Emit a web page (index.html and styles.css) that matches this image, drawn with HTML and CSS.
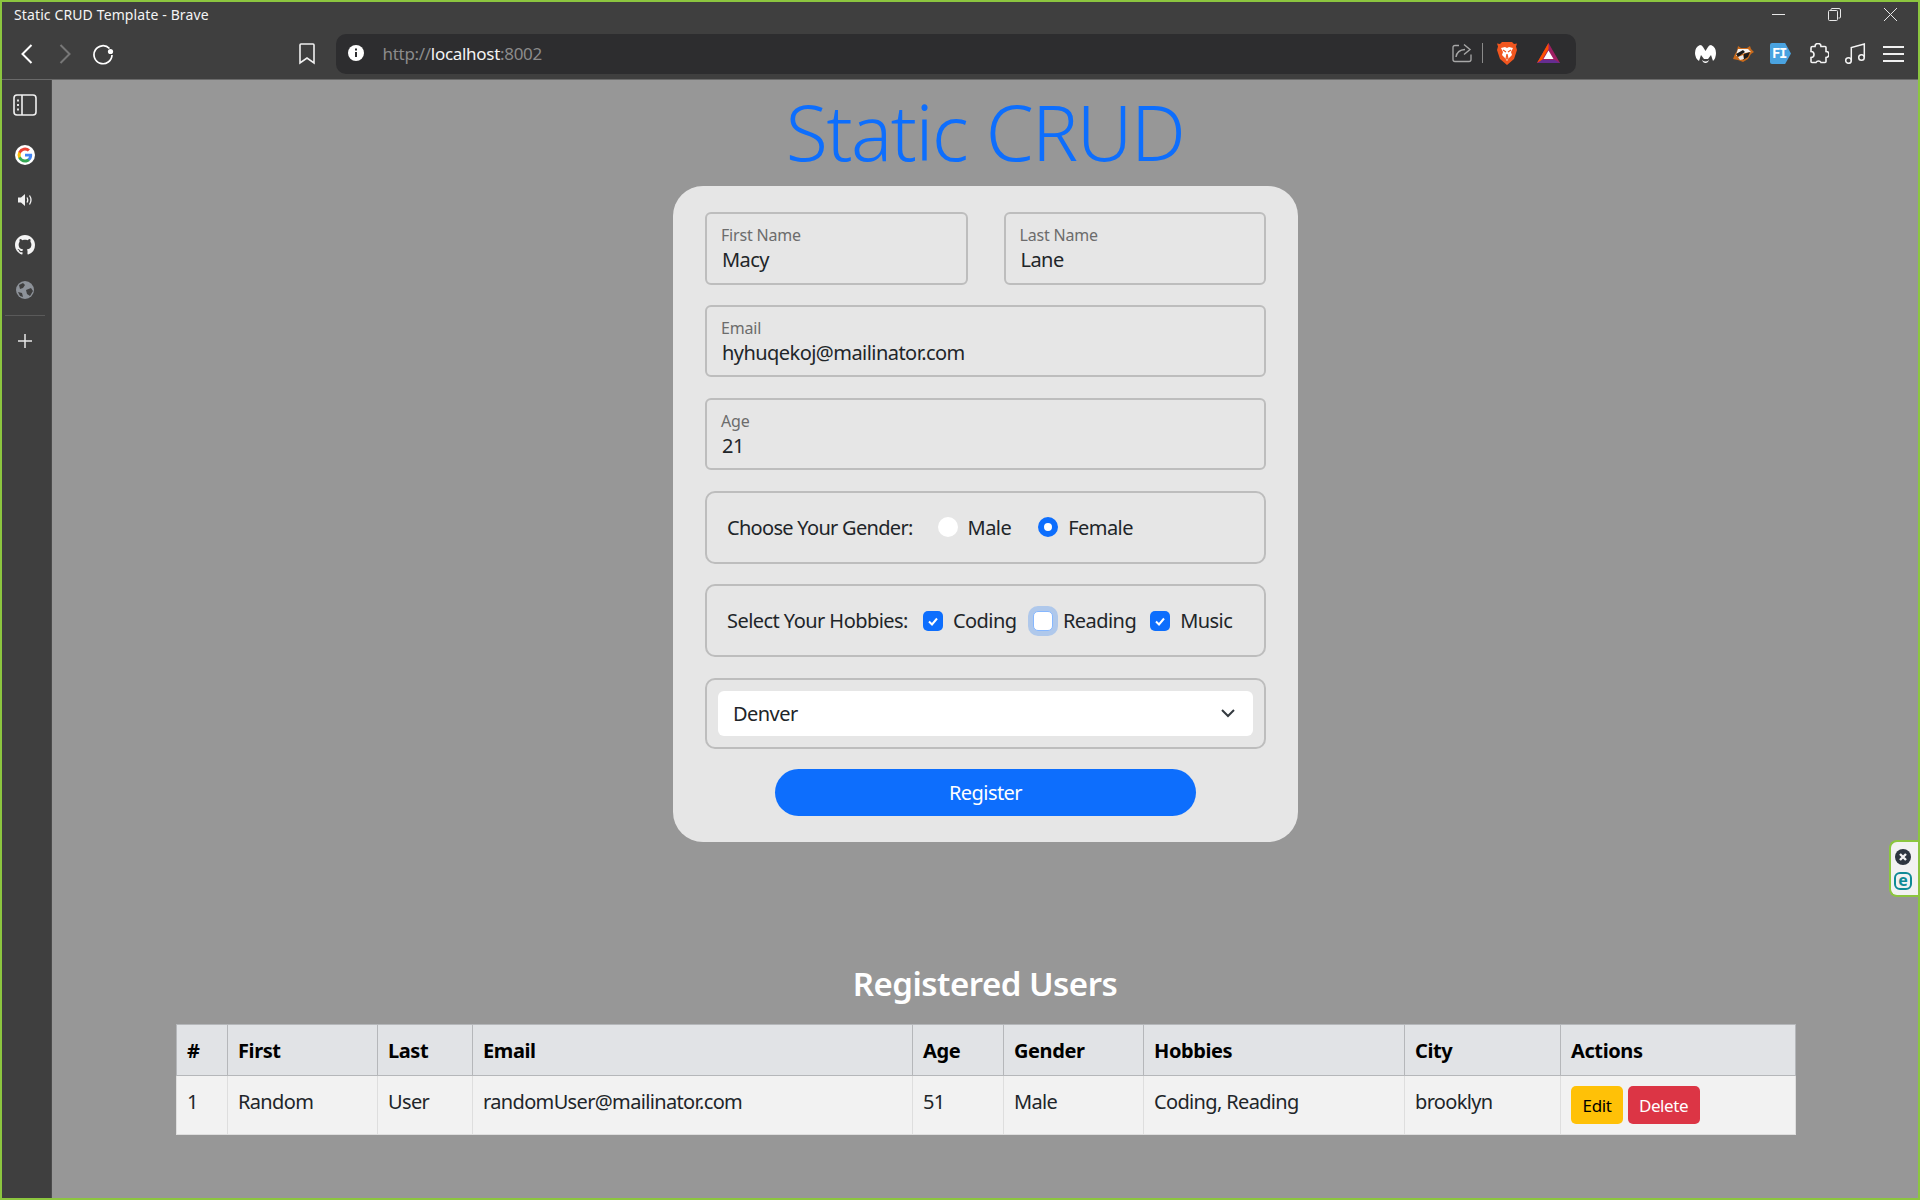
FILE: index.html
```html
<!DOCTYPE html>
<html lang="en">
<head>
    <meta charset="UTF-8">
    <title>Static CRUD Template - Brave</title>
    <link rel="stylesheet" href="styles.css">
</head>
<body>
    <div class="window">
        <div class="titlebar">
            <span class="window-title">Static CRUD Template - Brave</span>
            <div class="window-controls">
                <svg width="13" height="13" viewBox="0 0 13 13"><path d="M0 6.500h13" stroke="#e8e8e8" fill="none"/></svg>
                <svg width="13" height="13" viewBox="0 0 13 13"><path d="M3 2.500V1.500q0-1 1-1h7q1.500 0 1.500 1.500v7q0 1-1 1h-1M1.500 2.500h7q1 0 1 1v8q0 1-1 1h-7q-1 0-1-1v-8q0-1 1-1z" stroke="#e8e8e8" fill="none"/></svg>
                <svg width="13" height="13" viewBox="0 0 13 13"><path d="M0 0l13 13M13 0L0 13" stroke="#e8e8e8" fill="none"/></svg>
            </div>
        </div>

        <div class="toolbar">
            <div class="nav-buttons">
                <svg width="12" height="20" viewBox="0 0 12 20"><path d="M10.500 1L1.500 10l9 9" stroke="#fff" stroke-width="2" fill="none"/></svg>
                <svg width="12" height="20" viewBox="0 0 12 20"><path d="M1.500 1l9 9-9 9" stroke="#777" stroke-width="2" fill="none"/></svg>
                <svg class="reload" width="22" height="22" viewBox="0 0 22 22"><path d="M17.500 5.500A9 9 0 1 0 20 12" stroke="#fff" stroke-width="1.700" fill="none"/><circle cx="18.500" cy="8.500" r="2.600" fill="#fff"/></svg>
            </div>
            <svg class="bookmark" width="16" height="22" viewBox="0 0 16 22"><path d="M2 1h12q1 0 1 1v18l-7-5-7 5V2q0-1 1-1z" stroke="#f0f0f0" stroke-width="1.600" fill="none"/></svg>
            <div class="urlbar">
                <svg width="16" height="16" viewBox="0 0 16 16"><circle cx="8" cy="8" r="8" fill="#fff"/><path d="M8 7v5M8 3.500v2" stroke="#2d2d2f" stroke-width="2"/></svg>
                <span class="url"><span class="url-dim">http://</span>localhost<span class="url-dim">:8002</span></span>
                <svg width="20" height="20" viewBox="0 0 20 20"><path d="M7 3H3Q1 3 1 5v12q0 2 2 2h14q2 0 2-2v-5" stroke="#a8a8a8" stroke-width="1.300" fill="none" transform="translate(0 -.5)"/><path d="M4 14Q5 7 13 6.500M12 1.500l6 5-6 5" stroke="#a8a8a8" stroke-width="1.400" fill="none"/></svg>
                <span class="url-divider"></span>
                <svg class="brave" width="20" height="23" viewBox="0 0 20 23"><path d="M5 0h10l2 2 3-.5-1 3 1 3.500-3 9-7 6-7-6-3-9 1-3.500-1-3 3 .5z" fill="#f1561f"/><path d="M4 6l4-1 2 1 2-1 4 1-2 4 1 3-3 3-2 3-2-3-3-3 1-3z" fill="#fff"/><path d="M6 8l3 2M14 8l-3 2M9 17h2l-1-5z" stroke="#f1561f" stroke-width="1.200" fill="none"/></svg>
                <svg class="bat" width="23" height="20" viewBox="0 0 23 20"><path d="M11.500 0L0 20h23z" fill="#9e1f63"/><path d="M11.500 0L0 20l5-3 6.500-11z" fill="#ff5000"/><path d="M0 20h23l-5-3H5z" fill="#662d91"/><path d="M11.500 7.500L6.500 16h10z" fill="#fff"/></svg>
            </div>
            <div class="extensions">
                <svg width="21" height="18" viewBox="0 0 21 18"><path d="M5 0q2 0 3 2l2.500 4L13 2q1-2 3-2 5 2 5 8 0 5-3 8l-2-6-3 4h-4L6 10l-2 6Q0 13 0 8q0-6 5-8z" fill="#fff"/><path d="M7 15q3.500 3 7 0-1 3-3.500 3T7 15z" fill="#fff"/></svg>
                <svg width="21" height="17" viewBox="0 0 21 17"><path d="M5 1l3 2h6l3-2 1 3 3 3-3 2-3 5-5 3-5-2-5-1 2-5 2-3z" fill="#c96a1b"/><path d="M5 4h10l3 3-6 1-9 3 1-4z" fill="#f4f4f4"/><path d="M3 9l7-4 2 2-7 5zM11 9l6-2-2 5-5 3z" fill="#1b1b1b"/><path d="M5 12l5-2 1 4-4 1z" fill="#e8e8e8"/></svg>
                <span class="fi-logo">FI</span>
                <svg width="21" height="21" viewBox="0 0 21 21"><path d="M7 3.500a3 3 0 0 1 6 0h4q1 0 1 1v4a2.800 2.800 0 0 1 0 6v4q0 1-1 1h-4a2.800 2.800 0 0 0-5 0H4q-1 0-1-1v-4a3 3 0 0 0 0-6V5q0-1.500 1.500-1.500z" stroke="#f4f4f4" stroke-width="1.600" fill="none"/></svg>
                <svg width="21" height="21" viewBox="0 0 21 21"><circle cx="3.500" cy="17.500" r="2.800" stroke="#f4f4f4" stroke-width="1.500" fill="none"/><circle cx="16.500" cy="14.500" r="2.800" stroke="#f4f4f4" stroke-width="1.500" fill="none"/><path d="M6.300 17.500V4.500L19.300 1v13.500" stroke="#f4f4f4" stroke-width="1.500" fill="none"/></svg>
                <svg width="21" height="16" viewBox="0 0 21 16"><path d="M0 1h21M0 8h21M0 15h21" stroke="#f0f0f0" stroke-width="2"/></svg>
            </div>
        </div>

        <div class="main">
            <div class="sidebar">
                <svg width="24" height="24" viewBox="0 0 24 24"><rect x="1" y="2" width="22" height="20" rx="3" stroke="#f0f0f0" stroke-width="1.600" fill="none"/><path d="M9 2v20" stroke="#f0f0f0" stroke-width="1.600"/><path d="M5 6.500v2M5 11v2M5 15.500v2" stroke="#f0f0f0" stroke-width="1.800"/></svg>
                <svg class="side-google" width="20" height="20" viewBox="0 0 24 24"><circle cx="12" cy="12" r="12" fill="#fff"/><path d="M20.600 12.200c0-.6-.1-1.200-.2-1.800H12v3.400h4.800a4.100 4.100 0 0 1-1.800 2.700v2.200h2.900c1.700-1.600 2.700-3.900 2.700-6.500z" fill="#4285f4"/><path d="M12 21c2.400 0 4.500-.8 5.900-2.200L15 16.500c-.8.500-1.800.9-3 .9-2.300 0-4.300-1.600-5-3.700H4v2.300A9 9 0 0 0 12 21z" fill="#34a853"/><path d="M7 13.700a5.400 5.400 0 0 1 0-3.400V8H4a9 9 0 0 0 0 8z" fill="#fbbc05"/><path d="M12 6.600c1.300 0 2.500.5 3.400 1.300l2.600-2.600A9 9 0 0 0 4 8l3 2.300c.7-2.100 2.700-3.700 5-3.700z" fill="#ea4335"/></svg>
                <svg class="side-speaker" width="15" height="14" viewBox="0 0 15 14"><path d="M0 4.500h3L7 1v12L3 9.500H0z" fill="#f0f0f0"/><path d="M9 4.500q1.500 2.500 0 5M11.500 2.500q3 4.500 0 9" stroke="#f0f0f0" stroke-width="1.300" fill="none"/></svg>
                <svg class="side-github" width="20" height="20" viewBox="0 0 16 16"><path d="M8 0C3.580 0 0 3.580 0 8c0 3.540 2.290 6.530 5.470 7.590.4.070.55-.17.550-.38 0-.19-.01-.82-.01-1.490-2.010.37-2.530-.49-2.690-.94-.09-.23-.48-.94-.82-1.130-.28-.15-.68-.52-.01-.53.63-.01 1.080.58 1.230.82.720 1.210 1.870.87 2.330.66.070-.52.280-.87.510-1.070-1.780-.2-3.640-.89-3.640-3.950 0-.87.310-1.590.820-2.150-.08-.2-.36-1.020.08-2.120 0 0 .67-.21 2.200.82.640-.18 1.320-.27 2-.27.680 0 1.360.09 2 .27 1.530-1.040 2.200-.82 2.200-.82.440 1.100.160 1.920.080 2.120.510.560.820 1.270.820 2.150 0 3.070-1.870 3.750-3.650 3.950.290.250.540.730.540 1.480 0 1.070-.01 1.930-.01 2.200 0 .21.150.46.550.38A8.010 8.010 0 0 0 16 8c0-4.420-3.580-8-8-8z" fill="#f4f4f4"/></svg>
                <svg class="side-globe" width="18" height="18" viewBox="0 0 18 18"><circle cx="9" cy="9" r="9" fill="#8d9299"/><path d="M3 4l4-2 2 2-2 3-3 1zM10 9l5-2 2 3-3 5-3-2zM2 11l4 1 1 4-3-1z" fill="#3f3f3f"/></svg>
                <span class="side-divider"></span>
                <svg class="side-plus" width="14" height="14" viewBox="0 0 14 14"><path d="M7 0v14M0 7h14" stroke="#e8e8e8" stroke-width="1.500"/></svg>
            </div>

            <div class="content">
                <h1 class="page-title">Static CRUD</h1>

                <form class="card">
                    <div class="name-row">
                        <div class="field">
                            <label>First Name</label>
                            <input type="text" value="Macy">
                        </div>
                        <div class="field">
                            <label>Last Name</label>
                            <input type="text" value="Lane">
                        </div>
                    </div>
                    <div class="field">
                        <label>Email</label>
                        <input type="text" value="hyhuqekoj@mailinator.com">
                    </div>
                    <div class="field">
                        <label>Age</label>
                        <input type="text" value="21">
                    </div>

                    <div class="choice-row gender-row">
                        <span class="choice-title">Choose Your Gender:</span>
                        <span class="radio"></span><span class="choice-name">Male</span>
                        <span class="radio radio-on"></span><span class="choice-name">Female</span>
                    </div>

                    <div class="choice-row hobby-row">
                        <span class="choice-title">Select Your Hobbies:</span>
                        <span class="check check-on check-first"><svg width="14" height="14" viewBox="0 0 14 14"><path d="M3 7.500l3 3 5-6" stroke="#fff" stroke-width="2" fill="none"/></svg></span>
                        <span class="choice-name">Coding</span>
                        <span class="check check-focus"></span>
                        <span class="choice-name">Reading</span>
                        <span class="check check-on"><svg width="14" height="14" viewBox="0 0 14 14"><path d="M3 7.500l3 3 5-6" stroke="#fff" stroke-width="2" fill="none"/></svg></span>
                        <span class="choice-name">Music</span>
                    </div>

                    <div class="select-box">
                        <div class="select-value">
                            <span>Denver</span>
                            <svg width="14" height="9" viewBox="0 0 14 9"><path d="M1 1l6 6 6-6" stroke="#343a40" stroke-width="2" fill="none"/></svg>
                        </div>
                    </div>

                    <button type="button" class="btn-register">Register</button>
                </form>

                <h2 class="table-title">Registered Users</h2>

                <table class="users">
                    <thead>
                        <tr>
                            <th class="col-num">#</th>
                            <th class="col-first">First</th>
                            <th class="col-last">Last</th>
                            <th class="col-email">Email</th>
                            <th class="col-age">Age</th>
                            <th class="col-gender">Gender</th>
                            <th class="col-hobbies">Hobbies</th>
                            <th class="col-city">City</th>
                            <th>Actions</th>
                        </tr>
                    </thead>
                    <tbody>
                        <tr>
                            <td>1</td>
                            <td>Random</td>
                            <td>User</td>
                            <td>randomUser@mailinator.com</td>
                            <td>51</td>
                            <td>Male</td>
                            <td>Coding, Reading</td>
                            <td>brooklyn</td>
                            <td class="actions">
                                <button type="button" class="btn-small btn-edit">Edit</button>
                                <button type="button" class="btn-small btn-delete">Delete</button>
                            </td>
                        </tr>
                    </tbody>
                </table>

                <!-- ESET tab sits on top of the page at the right edge -->
                <div class="eset-tab">
                    <svg width="16" height="16" viewBox="0 0 16 16"><circle cx="8" cy="8" r="8" fill="#2e3640"/><path d="M5 5l6 6M11 5l-6 6" stroke="#f2f2f2" stroke-width="2.400"/></svg>
                    <span class="eset-e">e</span>
                </div>
            </div>
        </div>
    </div>
</body>
</html>
```

FILE: styles.css
```css
* {
    box-sizing: border-box;
}

body {
    margin: 0;
    font-family: "Noto Sans", "Open Sans", sans-serif;
    font-size: 20px;
    color: #212529;
    overflow: hidden;
}

.window {
    width: 1920px;
    height: 1200px;
    border: 2px solid #8cc63f;
    display: flex;
    flex-direction: column;
    background-color: #3f3f3f;
}

/* Title bar */
.titlebar {
    height: 28px;
    display: flex;
    justify-content: space-between;
    align-items: center;
    padding-left: 12px;
    padding-right: 21px;
    padding-bottom: 4px;
}

.window-title {
    font-size: 14px;
    color: #f4f4f4;
    letter-spacing: 0.12px;
}

.window-controls {
    display: flex;
    gap: 43px;
    align-items: center;
}

/* Toolbar */
.toolbar {
    height: 50px;
    display: flex;
    align-items: center;
    border-bottom: 1px solid #6a6a6a;
    padding-bottom: 4px;
    padding-top: 2px;
}

.nav-buttons {
    display: flex;
    align-items: center;
    gap: 26px;
    margin-left: 19px;
    width: 278px;
}

.reload {
    margin-left: -5px;
}

.bookmark {
    margin-right: 20.500px;
}

.urlbar {
    width: 1240px;
    height: 40px;
    margin-top: 1px;
    background-color: #2d2d2f;
    border-radius: 10px;
    display: flex;
    align-items: center;
    padding-left: 12px;
    padding-bottom: 2px;
}

.url {
    font-size: 17px;
    color: #f4f4f4;
    margin-left: 19px;
    width: 1069.500px;
    letter-spacing: -0.3px;
}

.url-dim {
    color: #8b8b8b;
}

.url-divider {
    width: 1px;
    height: 20px;
    background-color: #8a8a8a;
    margin-left: 10px;
}

.brave {
    margin-left: 14px;
}

.bat {
    margin-left: 20px;
}

.extensions {
    display: flex;
    align-items: center;
    gap: 16.500px;
    margin-left: 119.500px;
}

.fi-logo {
    width: 21px;
    height: 21px;
    background-color: #4aa3e0;
    clip-path: polygon(0 0, 72% 0, 100% 50%, 72% 100%, 0 100%);
    border-radius: 2px;
    font-family: "DejaVu Sans Mono", monospace;
    font-size: 14px;
    line-height: 21px;
    font-weight: 700;
    color: #fff;
    padding-left: 2px;
    letter-spacing: -1.500px;
}

/* Sidebar */
.main {
    flex: 1;
    display: flex;
    min-height: 0;
}

.sidebar {
    width: 50px;
    display: flex;
    flex-direction: column;
    align-items: center;
    border-right: 1px solid #4c4c4c;
    padding-top: 13px;
    padding-right: 3px;
}

.side-google {
    margin-top: 28px;
}

.side-speaker {
    margin-top: 28px;
}

.side-github {
    margin-top: 28px;
}

.side-globe {
    margin-top: 26px;
}

.side-divider {
    width: 40px;
    height: 1px;
    background-color: #5a5a5a;
    margin-top: 16px;
}

.side-plus {
    margin-top: 18px;
}

/* Page */
.content {
    flex: 1;
    background-color: #979797;
    position: relative;
}

.page-title {
    margin: 0;
    height: 106px;
    font-size: 77px;
    line-height: 104px;
    font-weight: 300;
    color: #0d6efd;
    text-align: center;
    letter-spacing: -1.500px;
}

.card {
    width: 625px;
    height: 656px;
    margin-left: 621px;
    padding: 26px 32px;
    background-color: #e6e6e6;
    border-radius: 30px;
    display: flex;
    flex-direction: column;
    gap: 20.500px;
}

.name-row {
    display: grid;
    grid-template-columns: 1fr 1fr;
    gap: 36px;
}

.field {
    height: 72.500px;
    border: 2px solid #bdbdbd;
    border-radius: 6px;
    padding: 10px 14px 0;
}

.field label {
    display: block;
    font-size: 16px;
    line-height: 22px;
    color: #6c6c6c;
    letter-spacing: -0.2px;
}

.field input {
    display: block;
    width: 100%;
    border: 0;
    padding: 0 0 0 1px;
    margin-top: 0;
    background: transparent;
    font-family: inherit;
    font-size: 20px;
    line-height: 28px;
    color: #212529;
    letter-spacing: -0.55px;
}

.choice-row {
    height: 73px;
    border: 2px solid #bdbdbd;
    border-radius: 10px;
    display: flex;
    align-items: center;
    padding-left: 20px;
    letter-spacing: -0.55px;
}

.gender-row .choice-title {
    letter-spacing: -0.7px;
}

.radio {
    width: 20px;
    height: 20px;
    border-radius: 50%;
    background-color: #fff;
    margin-left: 25px;
    margin-right: 10px;
}

.radio-on {
    background-color: #fff;
    border: 6px solid #0d6efd;
    margin-left: 27px;
}

.check {
    width: 20px;
    height: 20px;
    border-radius: 5px;
    background-color: #fff;
    display: flex;
    align-items: center;
    justify-content: center;
    margin-left: 14px;
    margin-right: 10px;
}

.check-on {
    background-color: #0d6efd;
}

.check-first {
    margin-left: 15px;
}

.check-focus {
    border: 1px solid #86b7fe;
    box-shadow: 0 0 0 5px rgba(13, 110, 253, .25);
    margin-left: 16.500px;
}

.select-box {
    height: 71px;
    border: 2px solid #bdbdbd;
    border-radius: 10px;
    padding: 11px 11px;
}

.select-value {
    height: 45px;
    background-color: #fff;
    border-radius: 6px;
    display: flex;
    align-items: center;
    justify-content: space-between;
    padding-left: 15px;
    padding-right: 18px;
    letter-spacing: -0.55px;
}

.btn-register {
    display: block;
    width: 421px;
    height: 47px;
    margin: 0 auto;
    border: 0;
    border-radius: 24px;
    background-color: #0d6efd;
    color: #fff;
    font-family: inherit;
    font-size: 20px;
    letter-spacing: -0.55px;
}

/* Users table */
.table-title {
    margin: 118px 0 16px;
    font-size: 33px;
    line-height: 48px;
    font-weight: 600;
    color: #fff;
    text-align: center;
    letter-spacing: -0.5px;
}

.users {
    width: 1620px;
    margin-left: 124px;
    border-collapse: collapse;
    table-layout: fixed;
    letter-spacing: -0.65px;
}

.users th,
.users td {
    text-align: left;
    padding: 10px;
    vertical-align: top;
}

.users th {
    height: 51px;
    padding-top: 12px;
    background-color: #e1e3e6;
    border: 1px solid #b5b7ba;
    color: #000;
    font-weight: 700;
    letter-spacing: -0.4px;
}

.users td {
    height: 59px;
    padding-top: 12px;
    background-color: #f2f2f2;
    border: 1px solid #dedede;
    color: #212529;
}

.col-num { width: 51px; }
.col-first { width: 150px; }
.col-last { width: 95px; }
.col-email { width: 440px; }
.col-age { width: 91px; }
.col-gender { width: 140px; }
.col-hobbies { width: 261px; }
.col-city { width: 156px; }

.users .actions {
    padding-top: 10px;
    padding-bottom: 0;
}

.btn-small {
    height: 38px;
    padding: 0 10px;
    border: 0;
    border-radius: 5px;
    font-family: inherit;
    font-size: 17px;
    letter-spacing: -0.4px;
}

.btn-edit {
    width: 52px;
    background-color: #ffc107;
    color: #000;
}

.btn-delete {
    width: 72px;
    background-color: #dc3545;
    color: #fff;
}

/* ESET tab */
.eset-tab {
    position: absolute;
    top: 760px;
    right: 0;
    width: 29px;
    height: 57px;
    border: 2px solid #8cc63f;
    border-right: 0;
    border-radius: 8px 0 0 8px;
    background-color: #f2f2f2;
    display: flex;
    flex-direction: column;
    align-items: center;
    gap: 7px;
    padding-top: 7px;
    padding-right: 3px;
}

.eset-e {
    width: 18px;
    height: 18px;
    border: 2px solid #0f8a96;
    border-radius: 6px;
    font-size: 16px;
    line-height: 12px;
    font-weight: 700;
    text-align: center;
    color: #0f8a96;
}
```
